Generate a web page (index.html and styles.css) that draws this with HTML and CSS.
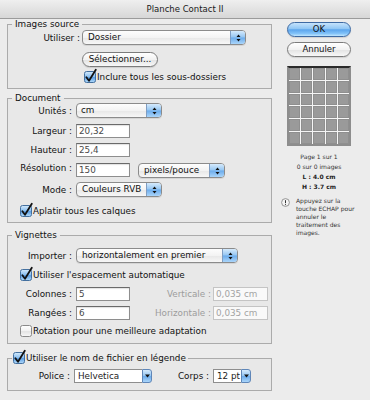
FILE: index.html
```html
<!DOCTYPE html>
<html lang="fr">
<head>
<meta charset="utf-8">
<title>Planche Contact II</title>
<link rel="stylesheet" href="styles.css">
</head>
<body>
<svg class="defs" width="0" height="0" aria-hidden="true">
  <defs>
    <linearGradient id="cbBlue" x1="0" y1="0" x2="0" y2="1">
      <stop offset="0" stop-color="#d6ebfc"/>
      <stop offset="0.5" stop-color="#86bdf0"/>
      <stop offset="0.55" stop-color="#5d9fe4"/>
      <stop offset="1" stop-color="#b4dcfb"/>
    </linearGradient>
    <linearGradient id="cbWhite" x1="0" y1="0" x2="0" y2="1">
      <stop offset="0" stop-color="#ffffff"/>
      <stop offset="0.5" stop-color="#f1f1f1"/>
      <stop offset="0.55" stop-color="#e4e4e4"/>
      <stop offset="1" stop-color="#f8f8f8"/>
    </linearGradient>
  </defs>
</svg>
<div class="window">
  <div class="titlebar">Planche Contact II</div>
  <div class="main">
    <div class="left">
      <fieldset class="group g1">
        <legend>Images source</legend>
        <div class="row">
          <span class="lbl l1">Utiliser :</span>
          <div class="popup p-dossier"><span class="ptext">Dossier</span><span class="parrows"><svg width="7" height="10" viewBox="0 0 7 10"><path d="M1.5 4 L3.5 1.5 L5.5 4Z M1.5 6 L3.5 8.5 L5.5 6Z" fill="#111"/></svg></span></div>
        </div>
        <div class="row r-select"><div class="pill select">Sélectionner...</div></div>
        <div class="row r-incl">
          <svg class="cb" width="12" height="12" viewBox="0 0 12 12"><rect x=".5" y=".5" width="11" height="11" rx="2" fill="url(#cbBlue)" stroke="#44709f"/><path d="M2.4 6.2 L5 9.8 L11.8 -1.2" fill="none" stroke="#111" stroke-width="1.8" stroke-linecap="round" stroke-linejoin="round"/></svg>
          <span class="cbtext">Inclure tous les sous-dossiers</span>
        </div>
      </fieldset>

      <fieldset class="group g2">
        <legend>Document</legend>
        <div class="row">
          <span class="lbl l2">Unités :</span>
          <div class="popup p-cm"><span class="ptext tight">cm</span><span class="parrows"><svg width="7" height="10" viewBox="0 0 7 10"><path d="M1.5 4 L3.5 1.5 L5.5 4Z M1.5 6 L3.5 8.5 L5.5 6Z" fill="#111"/></svg></span></div>
        </div>
        <div class="row r-f1">
          <span class="lbl l2">Largeur :</span>
          <div class="field">20,32</div>
        </div>
        <div class="row r-f2">
          <span class="lbl l2">Hauteur :</span>
          <div class="field">25,4</div>
        </div>
        <div class="row r-res">
          <span class="lbl l2">Résolution :</span>
          <div class="field">150</div>
          <div class="popup p-ppi"><span class="ptext">pixels/pouce</span><span class="parrows"><svg width="7" height="10" viewBox="0 0 7 10"><path d="M1.5 4 L3.5 1.5 L5.5 4Z M1.5 6 L3.5 8.5 L5.5 6Z" fill="#111"/></svg></span></div>
        </div>
        <div class="row r-mode">
          <span class="lbl l2">Mode :</span>
          <div class="popup p-cm"><span class="ptext">Couleurs RVB</span><span class="parrows"><svg width="7" height="10" viewBox="0 0 7 10"><path d="M1.5 4 L3.5 1.5 L5.5 4Z M1.5 6 L3.5 8.5 L5.5 6Z" fill="#111"/></svg></span></div>
        </div>
        <div class="row r-check r-flat">
          <svg class="cb" width="12" height="12" viewBox="0 0 12 12"><rect x=".5" y=".5" width="11" height="11" rx="2" fill="url(#cbBlue)" stroke="#44709f"/><path d="M2.4 6.2 L5 9.8 L11.8 -1.2" fill="none" stroke="#111" stroke-width="1.8" stroke-linecap="round" stroke-linejoin="round"/></svg>
          <span class="cbtext">Aplatir tous les calques</span>
        </div>
      </fieldset>

      <fieldset class="group g3">
        <legend>Vignettes</legend>
        <div class="row">
          <span class="lbl l2">Importer :</span>
          <div class="popup p-import"><span class="ptext">horizontalement en premier</span><span class="parrows"><svg width="7" height="10" viewBox="0 0 7 10"><path d="M1.5 4 L3.5 1.5 L5.5 4Z M1.5 6 L3.5 8.5 L5.5 6Z" fill="#111"/></svg></span></div>
        </div>
        <div class="row r-check r-auto">
          <svg class="cb" width="12" height="12" viewBox="0 0 12 12"><rect x=".5" y=".5" width="11" height="11" rx="2" fill="url(#cbBlue)" stroke="#44709f"/><path d="M2.4 6.2 L5 9.8 L11.8 -1.2" fill="none" stroke="#111" stroke-width="1.8" stroke-linecap="round" stroke-linejoin="round"/></svg>
          <span class="cbtext">Utiliser l'espacement automatique</span>
        </div>
        <div class="row r-col">
          <span class="lbl l2">Colonnes :</span>
          <div class="field">5</div>
          <span class="lbl l3 disabled">Verticale :</span>
          <div class="field f-dis">0,035 cm</div>
        </div>
        <div class="row r-rang">
          <span class="lbl l2">Rangées :</span>
          <div class="field">6</div>
          <span class="lbl l3 disabled">Horizontale :</span>
          <div class="field f-dis">0,035 cm</div>
        </div>
        <div class="row r-check r-rot">
          <svg class="cb" width="12" height="12" viewBox="0 0 12 12"><rect x=".5" y=".5" width="11" height="11" rx="2" fill="url(#cbWhite)" stroke="#8a8a8a"/></svg>
          <span class="cbtext">Rotation pour une meilleure adaptation</span>
        </div>
      </fieldset>

      <fieldset class="group g4">
        <legend class="cb-legend">
          <svg class="cb" width="12" height="12" viewBox="0 0 12 12"><rect x=".5" y=".5" width="11" height="11" rx="2" fill="url(#cbBlue)" stroke="#44709f"/><path d="M2.4 6.2 L5 9.8 L11.8 -1.2" fill="none" stroke="#111" stroke-width="1.8" stroke-linecap="round" stroke-linejoin="round"/></svg>
          <span class="cbtext">Utiliser le nom de fichier en légende</span>
        </legend>
        <div class="row">
          <span class="lbl l4">Police :</span>
          <div class="combo c-font"><span class="ctext">Helvetica</span><span class="cbtn"><svg width="5" height="4" viewBox="0 0 5 4"><path d="M0 0.5 L5 0.5 L2.5 3.5Z" fill="#111"/></svg></span></div>
          <span class="lbl l5">Corps :</span>
          <div class="combo c-size"><span class="ctext">12 pt</span><span class="cbtn"><svg width="5" height="4" viewBox="0 0 5 4"><path d="M0 0.5 L5 0.5 L2.5 3.5Z" fill="#111"/></svg></span></div>
        </div>
      </fieldset>
    </div>

    <div class="right">
      <div class="pill ok">OK</div>
      <div class="pill cancel">Annuler</div>
      <div class="preview">
        <i></i><i></i><i></i><i></i><i></i>
        <i></i><i></i><i></i><i></i><i></i>
        <i></i><i></i><i></i><i></i><i></i>
        <i></i><i></i><i></i><i></i><i></i>
        <i></i><i></i><i></i><i></i><i></i>
        <i></i><i></i><i></i><i></i><i></i>
      </div>
      <div class="pinfo">
        <div class="pl">Page 1 sur 1</div>
        <div class="pl">0 sur 0 images</div>
        <div class="pl strong">L : 4.0 cm</div>
        <div class="pl strong last">H : 3.7 cm</div>
      </div>
      <div class="info">
        <svg class="info-icon" width="9" height="9" viewBox="0 0 9 9"><circle cx="4.5" cy="4.5" r="3.9" fill="#f4f4f4" stroke="#8a8a8a" stroke-width="0.9"/><path d="M4.5 2.2 V5.2" stroke="#333" stroke-width="1"/><circle cx="4.5" cy="6.6" r="0.55" fill="#333"/></svg>
        <div class="info-text">Appuyez sur la<br>touche ECHAP pour<br>annuler le<br>traitement des<br>images.</div>
      </div>
    </div>
  </div>
</div>
</body>
</html>
```

FILE: styles.css
```css
html, body {
  margin: 0;
  padding: 0;
}
body {
  background: #ececec;
  font-family: "DejaVu Sans", "Noto Sans", sans-serif;
  font-size: 8.8px;
  color: #111;
}
.defs {
  display: block;
  width: 0;
  height: 0;
}
.window {
  width: 370px;
  height: 400px;
  overflow: hidden;
  background: #ececec;
}
.titlebar {
  height: 17px;
  padding-top: 1px;
  line-height: 17px;
  border-bottom: 1px solid #9b9b9b;
  background: linear-gradient(#efefef, #d7d7d7);
  text-align: center;
  font-size: 8.5px;
  color: #1a1a1a;
}
.main {
  display: flex;
  padding-left: 7px;
}
.left {
  width: 265px;
  display: flex;
  flex-direction: column;
}

/* group boxes */
.group {
  margin: 0;
  padding: 0;
  min-width: 0;
  border: 1px solid #ababab;
  background: #e8e8e8;
}
.group legend {
  margin-left: 4px;
  padding: 0 3px;
  height: 10px;
  line-height: 10px;
  color: #111;
}
.g1 { padding: 1px 0 5px; }
.g2 { margin-top: 4px; padding: 0 0 5px; }
.g3 { margin-top: 7px; padding: 8px 0 6px; }
.g4 { margin-top: 8px; padding: 5px 0 7px; }
.group legend.cb-legend {
  display: flex;
  align-items: center;
  height: 12px;
  padding: 0 2px 0 1px;
}

/* rows */
.row {
  display: flex;
  align-items: center;
}
.lbl {
  flex: none;
  text-align: right;
  white-space: nowrap;
}
.l1 { width: 72px; margin-right: 2px; }
.l2 { width: 64px; margin-right: 4px; }
.l3 { width: 81px; margin-right: 2px; }
.l4 { width: 62px; margin-right: 4px; }
.l5 { width: 57px; margin-right: 4px; }
.disabled { color: #9c9c9c; }

.r-select { margin-top: 7px; padding-left: 74px; }
.r-incl { margin-top: 4px; padding-left: 76px; }
.r-f1 { margin-top: 6px; }
.r-f2 { margin-top: 5px; }
.r-res { margin-top: 6px; align-items: flex-start; }
.r-mode { margin-top: 4px; }
.r-check { padding-left: 12px; }
.r-flat { margin-top: 8px; }
.r-auto { margin-top: 6px; }
.r-col { margin-top: 6px; }
.r-rang { margin-top: 5px; }
.r-rot { margin-top: 5px; }

/* checkbox */
.cb {
  flex: none;
  overflow: visible;
  display: block;
}
.cbtext {
  margin-left: 1px;
  white-space: nowrap;
  line-height: 12px;
}

/* pop-up buttons */
.popup {
  flex: none;
  box-sizing: border-box;
  height: 15px;
  display: flex;
  border: 1px solid #8b8b8b;
  border-radius: 4px;
  overflow: hidden;
  background: linear-gradient(#fdfdfd, #f3f3f3 50%, #e7e7e7 52%, #f7f7f7);
  box-shadow: 0 1px 0 rgba(0, 0, 0, 0.08);
}
.ptext {
  flex: 1;
  padding-left: 5px;
  line-height: 13px;
  white-space: nowrap;
  overflow: hidden;
}
.ptext.tight { padding-left: 4px; }
.parrows {
  flex: none;
  width: 14px;
  display: flex;
  align-items: center;
  justify-content: center;
  border-left: 1px solid #7f9dc2;
  background: linear-gradient(#d5eafc, #95c6f2 48%, #6babeb 52%, #aad5fa);
}
.p-dossier { width: 164px; }
.p-cm { width: 86px; }
.p-ppi { width: 87px; margin-left: 8px; }
.p-import { width: 162px; }

/* text fields */
.field {
  flex: none;
  box-sizing: border-box;
  width: 54px;
  height: 14px;
  padding-left: 2px;
  line-height: 12px;
  background: #fff;
  border: 1px solid #8e8e8e;
  border-top-color: #6a6a6a;
  box-shadow: inset 0 1px 1px rgba(0, 0, 0, 0.12);
  color: #4a4a4a;
  white-space: nowrap;
}
.f-dis {
  width: 55px;
  border-color: #c4c4c4;
  box-shadow: none;
  background: #f9f9f9;
  color: #a3a3a3;
}

/* combo boxes */
.combo {
  flex: none;
  display: flex;
  box-sizing: border-box;
  height: 14px;
}
.ctext {
  flex: 1;
  box-sizing: border-box;
  padding-left: 3px;
  line-height: 12px;
  background: #fff;
  border: 1px solid #8e8e8e;
  border-right: none;
  white-space: nowrap;
  overflow: hidden;
  color: #222;
}
.cbtn {
  flex: none;
  box-sizing: border-box;
  width: 10px;
  display: flex;
  align-items: center;
  justify-content: center;
  border: 1px solid #5f86b8;
  border-radius: 0 3px 3px 0;
  background: linear-gradient(#d5eafc, #95c6f2 48%, #6babeb 52%, #aad5fa);
}
.c-font { width: 78px; }
.c-size { width: 38px; }

/* pill buttons */
.pill {
  box-sizing: border-box;
  height: 15px;
  line-height: 13px;
  text-align: center;
  border: 1px solid #7b7b7b;
  border-radius: 8px;
  background: linear-gradient(#ffffff, #f2f2f2 50%, #e3e3e3 53%, #f8f8f8);
  box-shadow: 0 1px 1px rgba(0, 0, 0, 0.12);
  white-space: nowrap;
  font-size: 8.5px;
}
.select {
  width: 76px;
  font-size: 8.8px;
}

/* right column */
.right {
  margin-left: 9px;
  width: 85px;
  display: flex;
  flex-direction: column;
}
.ok, .cancel {
  width: 64px;
  margin-left: 6px;
}
.ok {
  margin-top: 3px;
  border-color: #3e6aa3;
  background: linear-gradient(#c6e3fc, #8fc6f4 45%, #5ba5ed 52%, #80c1f8 80%, #bfe6ff);
}
.cancel {
  margin-top: 5px;
}
.preview {
  margin-top: 9px;
  margin-left: 6px;
  box-sizing: border-box;
  width: 64px;
  height: 80px;
  border: 2px solid #8d8d8d;
  border-top: 2px solid #2a2a2a;
  background: #f5f5f5;
  display: grid;
  grid-template-columns: repeat(5, 1fr);
  grid-template-rows: repeat(6, 1fr);
  gap: 1px;
}
.preview i {
  display: block;
  background: #9a9a9a;
  box-shadow: inset 0 0 0 1px #8f8f8f;
}
.pinfo {
  margin-top: 6px;
  margin-left: 6px;
  width: 64px;
  text-align: center;
  font-size: 6px;
  color: #333;
}
.pl {
  height: 10px;
  line-height: 10px;
  white-space: nowrap;
}
.pl.last {
  height: 9px;
  line-height: 9px;
}
.strong {
  font-weight: bold;
  color: #222;
}
.info {
  margin-top: 6px;
  display: flex;
  align-items: flex-start;
}
.info-icon {
  flex: none;
  display: block;
  margin-top: 1px;
}
.info-text {
  margin-left: 6px;
  font-size: 6px;
  line-height: 8px;
  color: #333;
  white-space: nowrap;
}
```
